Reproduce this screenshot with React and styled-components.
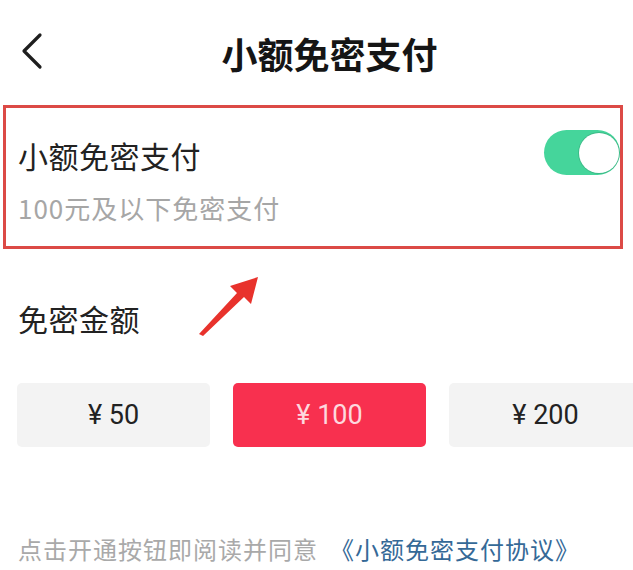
import React from "react";
import styled, { createGlobalStyle } from "styled-components";

const GlobalStyle = createGlobalStyle`
  html, body {
    margin: 0;
    padding: 0;
    background: #ffffff;
    overflow: hidden;
  }
  body {
    font-family: "Noto Sans CJK SC", "Noto Sans", sans-serif;
  }
`;

const Page = styled.div`
  position: relative;
  width: 659px;
  height: 570px;
  background: #ffffff;
`;

const Header = styled.div`
  height: 105px;
  display: grid;
  grid-template-columns: 1fr auto 1fr;
  align-items: center;
`;

const BackButton = styled.div`
  padding-left: 20px;
  display: flex;
  align-items: center;
  margin-top: -4px;
`;

const Title = styled.h1`
  margin: 0;
  font-size: 36px;
  font-weight: 700;
  color: #151515;
  line-height: 1;
`;

const SettingBox = styled.div`
  width: 620px;
  box-sizing: border-box;
  margin-left: 3px;
  border: 3px solid #dc4a46;
  padding: 27px 0 21px 12px;
`;

const SettingTop = styled.div`
  height: 40px;
  display: flex;
  align-items: center;
  justify-content: space-between;
`;

const SettingTitle = styled.div`
  font-size: 30px;
  line-height: 40px;
  color: #222222;
  letter-spacing: 0.5px;
`;

const SettingDesc = styled.div`
  margin-top: 16px;
  font-size: 26px;
  line-height: 34px;
  color: #a6a6a6;
  letter-spacing: 1px;
`;

const Switch = styled.div`
  flex: none;
  width: 76px;
  height: 45px;
  margin-top: -5px;
  border-radius: 23px;
  background: ${(props) => (props.on ? "#45d59b" : "#dddddd")};
  display: flex;
  align-items: center;
  justify-content: ${(props) => (props.on ? "flex-end" : "flex-start")};
  padding: 0 1px;
  box-sizing: border-box;
`;

const Knob = styled.div`
  width: 40px;
  height: 40px;
  border-radius: 50%;
  background: #ffffff;
  box-shadow: 0 0 0 1px rgba(0, 0, 0, 0.12);
`;

const SectionLabel = styled.div`
  margin: 49px 0 0 18px;
  font-size: 30px;
  line-height: 40px;
  color: #222222;
  letter-spacing: 0.5px;
`;

const AmountGrid = styled.div`
  margin: 45px 0 0 17px;
  display: grid;
  grid-template-columns: repeat(3, 193px);
  gap: 23px;
`;

const AmountButton = styled.div`
  height: 64px;
  border-radius: 5px;
  background: ${(props) => (props.active ? "#f8304f" : "#f3f3f3")};
  color: ${(props) => (props.active ? "rgba(255,255,255,0.82)" : "#222222")};
  display: flex;
  align-items: center;
  justify-content: center;
  font-family: Roboto, "Liberation Sans", sans-serif;
  font-size: 27px;
  font-weight: 400;
`;

const Footer = styled.div`
  margin: 85px 0 0 18px;
  font-size: 24px;
  line-height: 34px;
  letter-spacing: 1px;
  color: #a9a9a9;
  display: flex;
  gap: 12px;
`;

const Link = styled.span`
  color: #356997;
`;

const Arrow = styled.svg`
  position: absolute;
  left: 0;
  top: 0;
  pointer-events: none;
`;

const amounts = [50, 100, 200];

export default function App() {
  return (
    <>
      <GlobalStyle />
      <Page>
        <Header>
          <BackButton>
            <svg width="26" height="38" viewBox="0 0 26 38">
              <polyline
                points="20,3 4,19 20,35"
                fill="none"
                stroke="#1e1e1e"
                strokeWidth="3.2"
                strokeLinecap="round"
                strokeLinejoin="round"
              />
            </svg>
          </BackButton>
          <Title>小额免密支付</Title>
          <div />
        </Header>

        <SettingBox>
          <SettingTop>
            <SettingTitle>小额免密支付</SettingTitle>
            <Switch on>
              <Knob />
            </Switch>
          </SettingTop>
          <SettingDesc>100元及以下免密支付</SettingDesc>
        </SettingBox>

        <SectionLabel>免密金额</SectionLabel>

        <AmountGrid>
          {amounts.map((a) => (
            <AmountButton key={a} active={a === 100}>
              ¥ {a}
            </AmountButton>
          ))}
        </AmountGrid>

        <Footer>
          <span>点击开通按钮即阅读并同意</span>
          <Link>《小额免密支付协议》</Link>
        </Footer>

        <Arrow width="659" height="570" viewBox="0 0 659 570">
          <polygon
            points="199,334 237,293 230,286 258,277 251,304 244,297 203,336"
            fill="#e8322c"
          />
        </Arrow>
      </Page>
    </>
  );
}
